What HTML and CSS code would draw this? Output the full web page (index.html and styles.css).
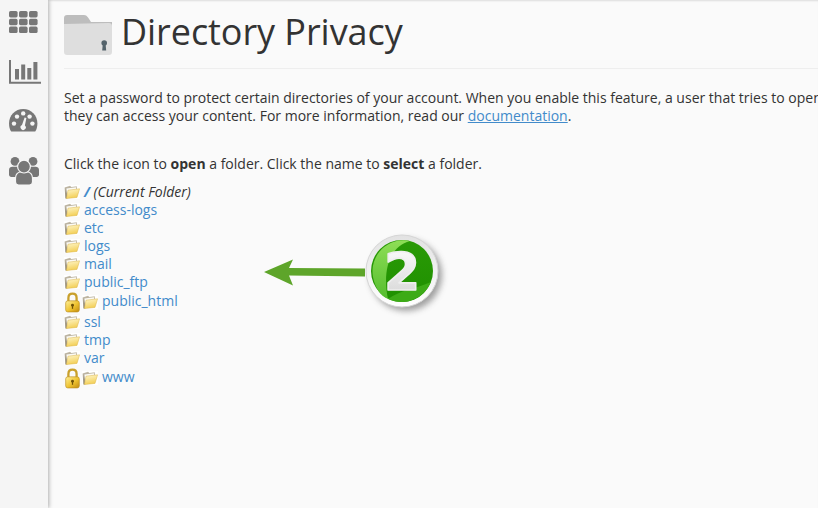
FILE: index.html
```html
<!DOCTYPE html>
<html lang="en">
<head>
    <meta charset="UTF-8">
    <meta name="viewport" content="width=device-width, initial-scale=1.0">
    <title>Directory Privacy</title>
    <link rel="stylesheet" href="styles.css">
</head>
<body>
    <!-- shared icons -->
    <svg class="defs" width="0" height="0" aria-hidden="true">
        <defs>
            <linearGradient id="folderFront" x1="0" y1="0" x2="0.3" y2="1">
                <stop offset="0" stop-color="#fff8cf"/>
                <stop offset="1" stop-color="#f3cf56"/>
            </linearGradient>
            <linearGradient id="folderBack" x1="0" y1="0" x2="0" y2="1">
                <stop offset="0" stop-color="#c4bcaa"/>
                <stop offset="1" stop-color="#8a826f"/>
            </linearGradient>
            <linearGradient id="lockBody" x1="0" y1="0" x2="1" y2="1">
                <stop offset="0" stop-color="#fff09a"/>
                <stop offset="0.55" stop-color="#eec22f"/>
                <stop offset="1" stop-color="#c08a10"/>
            </linearGradient>
            <linearGradient id="badgeGreen" x1="0" y1="0" x2="0" y2="1">
                <stop offset="0" stop-color="#2a9a06"/>
                <stop offset="1" stop-color="#1f9000"/>
            </linearGradient>
            <linearGradient id="badgeGlow" x1="0" y1="0" x2="0" y2="1">
                <stop offset="0" stop-color="#8ede56"/>
                <stop offset="1" stop-color="#55bd2e"/>
            </linearGradient>
            <linearGradient id="badgeRing" x1="0" y1="0" x2="0" y2="1">
                <stop offset="0" stop-color="#e2e2e2"/>
                <stop offset="1" stop-color="#ffffff"/>
            </linearGradient>
            <linearGradient id="digitFill" x1="0" y1="0" x2="0" y2="1">
                <stop offset="0" stop-color="#ffffff"/>
                <stop offset="1" stop-color="#d4d4d4"/>
            </linearGradient>
            <filter id="badgeShadow" x="-30%" y="-30%" width="170%" height="170%">
                <feGaussianBlur stdDeviation="3"/>
            </filter>
            <symbol id="folder" viewBox="0 0 16 14">
                <path d="M0.6 2.6 L6 0.8 L7.4 2 L12.8 1.2 L12.8 4 L3 13.6 L1.4 13.6 Z" fill="url(#folderBack)"/>
                <path d="M2.4 3.4 L12 2.2 L12 5 L3.4 12 Z" fill="#fbfaf5"/>
                <path d="M4 5.2 L15.6 3.8 L13 12.4 L2.4 13.6 Z" fill="url(#folderFront)" stroke="#dcb64c" stroke-width="0.5"/>
            </symbol>
            <symbol id="lock" viewBox="0 0 15 20">
                <path d="M3.6 9 L3.6 5.6 C3.6 3 5.2 1.6 7.5 1.6 C9.8 1.6 11.4 3 11.4 5.6 L11.4 9" fill="none" stroke="#c9a02c" stroke-width="2.2"/>
                <rect x="1" y="8.4" width="13" height="10.6" rx="2" fill="url(#lockBody)" stroke="#b98a1a" stroke-width="0.6"/>
                <circle cx="7.5" cy="12.6" r="1.4" fill="#6e5208"/>
                <rect x="6.9" y="13" width="1.2" height="3" fill="#6e5208"/>
            </symbol>
        </defs>
    </svg>

    <div class="layout">
        <nav class="sidebar">
            <svg class="nav-icon" width="30" height="24" viewBox="0 0 30 24">
                <g fill="#777">
                    <rect x="0" y="0" width="8.6" height="6.4" rx="1.6"/>
                    <rect x="10" y="0" width="8.6" height="6.4" rx="1.6"/>
                    <rect x="20" y="0" width="8.6" height="6.4" rx="1.6"/>
                    <rect x="0" y="7.8" width="8.6" height="6.4" rx="1.6"/>
                    <rect x="10" y="7.8" width="8.6" height="6.4" rx="1.6"/>
                    <rect x="20" y="7.8" width="8.6" height="6.4" rx="1.6"/>
                    <rect x="0" y="15.6" width="8.6" height="6.4" rx="1.6"/>
                    <rect x="10" y="15.6" width="8.6" height="6.4" rx="1.6"/>
                    <rect x="20" y="15.6" width="8.6" height="6.4" rx="1.6"/>
                </g>
            </svg>
            <svg class="nav-icon" width="32" height="24" viewBox="0 0 32 24">
                <path d="M1 0 V22.8 H32" fill="none" stroke="#777" stroke-width="2"/>
                <g fill="#777">
                    <rect x="6" y="9" width="4" height="10.5"/>
                    <rect x="12.2" y="4.5" width="4" height="15"/>
                    <rect x="18.3" y="8" width="4" height="11.5"/>
                    <rect x="24.4" y="2" width="4" height="17.5"/>
                </g>
            </svg>
            <svg class="nav-icon" width="29" height="23" viewBox="0 0 29 23">
                <path d="M14.2 0 C6.2 0 0 6.4 0 14.4 C0 17.6 0.8 20.4 2.2 22.6 L26.2 22.6 C27.6 20.4 28.4 17.6 28.4 14.4 C28.4 6.4 22.2 0 14.2 0 Z" fill="#777"/>
                <g fill="#f5f5f5">
                    <circle cx="5" cy="14.6" r="2.2"/>
                    <circle cx="8" cy="7.6" r="2.2"/>
                    <circle cx="14.2" cy="4.4" r="2.2"/>
                    <circle cx="23.4" cy="14.6" r="2.2"/>
                    <circle cx="20.6" cy="7.6" r="2.2"/>
                    <path d="M15.6 8.5 L17.4 9 L15.9 16.4 A2.6 2.6 0 1 1 13 16 Z"/>
                </g>
            </svg>
            <svg class="nav-icon" width="30" height="28" viewBox="0 0 30 28">
                <g fill="#777">
                    <circle cx="6" cy="4.4" r="4.4"/>
                    <circle cx="24" cy="4.4" r="4.4"/>
                    <path d="M0 13 C0 10.6 1.6 9.8 3.4 9.8 L26.6 9.8 C28.4 9.8 30 10.6 30 13 L30 17.6 C30 19 29 20 27.6 20 L2.4 20 C1 20 0 19 0 17.6 Z"/>
                    <path d="M6.5 21 C6.5 17.4 9 15 11.6 15 L18.4 15 C21 15 23.5 17.4 23.5 21 L23.5 25 C23.5 26.8 22.2 28 20.4 28 L9.6 28 C7.8 28 6.5 26.8 6.5 25 Z" stroke="#f5f5f5" stroke-width="1.2"/>
                    <circle cx="15" cy="9.6" r="6.4" stroke="#f5f5f5" stroke-width="1.2"/>
                </g>
            </svg>
        </nav>

        <main class="content">
            <header class="page-header">
                <svg class="page-icon" width="48" height="40" viewBox="0 0 48 40">
                    <path d="M0 3 C0 1.2 1.2 0 3 0 L20 0 C22 0 23 1 24.4 3 L27 7 L48 7 L48 14 L0 14 Z" fill="#bdbdbd"/>
                    <path d="M0 9 L45 8 C46.8 8 48 9.2 48 11 L48 37 C48 38.8 46.8 40 45 40 L3 40 C1.2 40 0 38.8 0 37 Z" fill="#dedede"/>
                    <circle cx="40.2" cy="28" r="2.8" fill="#54636b"/>
                    <path d="M38.8 29 L41.6 29 L42.2 35.5 L38.2 35.5 Z" fill="#54636b"/>
                </svg>
                <h1>Directory Privacy</h1>
            </header>

            <p class="intro">
                Set a password to protect certain directories of your account. When you enable this feature, a user that tries to open<br>
                they can access your content. For more information, read our <a href="#">documentation</a>.
            </p>

            <p class="hint">Click the icon to <b>open</b> a folder. Click the name to <b>select</b> a folder.</p>

            <ul class="tree">
                <li class="tree-row current">
                    <svg class="folder"><use href="#folder"/></svg>
                    <span class="current-name"><a href="#">/</a> (Current Folder)</span>
                </li>
                <li class="tree-row"><svg class="folder"><use href="#folder"/></svg><a href="#">access-logs</a></li>
                <li class="tree-row"><svg class="folder"><use href="#folder"/></svg><a href="#">etc</a></li>
                <li class="tree-row"><svg class="folder"><use href="#folder"/></svg><a href="#">logs</a></li>
                <li class="tree-row"><svg class="folder"><use href="#folder"/></svg><a href="#">mail</a></li>
                <li class="tree-row"><svg class="folder"><use href="#folder"/></svg><a href="#">public_ftp</a></li>
                <li class="tree-row locked"><svg class="lock"><use href="#lock"/></svg><svg class="folder"><use href="#folder"/></svg><a href="#">public_html</a></li>
                <li class="tree-row"><svg class="folder"><use href="#folder"/></svg><a href="#">ssl</a></li>
                <li class="tree-row"><svg class="folder"><use href="#folder"/></svg><a href="#">tmp</a></li>
                <li class="tree-row"><svg class="folder"><use href="#folder"/></svg><a href="#">var</a></li>
                <li class="tree-row locked"><svg class="lock"><use href="#lock"/></svg><svg class="folder"><use href="#folder"/></svg><a href="#">www</a></li>
            </ul>
        </main>
    </div>

    <!-- step marker drawn over the page -->
    <svg class="step-marker" width="190" height="90" viewBox="0 0 190 90">
        <path d="M4 42 L33 29.5 L29 38 L105 38.6 L105 46.6 L29 45.6 L33 55.5 Z" fill="#5ea52a"/>
        <circle cx="146" cy="45" r="36" fill="#555" opacity="0.55" filter="url(#badgeShadow)"/>
        <circle cx="142" cy="41" r="36" fill="url(#badgeRing)" stroke="#d6d6d6" stroke-width="1"/>
        <circle cx="142" cy="41" r="31" fill="url(#badgeGreen)"/>
        <path d="M113 47 A31 31 0 0 1 150 11 C130 16 122 40 128 69 C120 66 115 57 113 47 Z" fill="url(#badgeGlow)"/>
        <path d="M128 69 C140 60 158 58 171 52 C166 64 154 72 142 72 C137 72 132 71 128 69 Z" fill="#3dab17"/>
        <text class="step-digit" x="142" y="59.5" text-anchor="middle">2</text>
    </svg>
</body>
</html>
```

FILE: styles.css
```css
html, body {
    margin: 0;
    padding: 0;
    height: 100%;
    overflow: hidden;
}
body {
    position: relative;
    font-family: 'Open Sans', sans-serif;
    font-size: 14px;
    color: #333;
    background-color: #fafafa;
}
a {
    color: #428bca;
    text-decoration: none;
}
.defs {
    position: absolute;
}
.layout {
    display: flex;
    height: 100%;
}
.sidebar {
    flex: 0 0 48px;
    display: flex;
    flex-direction: column;
    align-items: flex-start;
    gap: 25px;
    box-sizing: border-box;
    padding: 11px 0 0 9px;
    background-color: #f5f5f5;
    box-shadow: 1px 0 4px rgba(0, 0, 0, 0.3);
}
.nav-icon {
    display: block;
}
.content {
    flex: 1;
    min-width: 0;
    padding: 15px 0 0 16px;
    overflow: hidden;
    box-shadow: inset 0 2px 2px -1px rgba(0, 0, 0, 0.12);
}
.page-header {
    display: flex;
    align-items: flex-start;
    gap: 9px;
    height: 53px;
    border-bottom: 1px solid #eee;
}
.page-icon {
    flex: none;
}
.page-header h1 {
    margin: -5px 0 0;
    font-size: 36px;
    font-weight: 400;
    line-height: 44px;
    letter-spacing: -0.06px;
    color: #333;
}
.intro {
    margin: 20px 0 0;
    line-height: 18px;
    white-space: nowrap;
}
.intro a {
    text-decoration: underline;
}
.hint {
    margin: 30px 0 0;
    line-height: 18px;
}
.tree {
    list-style: none;
    margin: 10px 0 0;
    padding: 0;
}
.tree-row {
    display: flex;
    align-items: center;
    height: 18px;
    line-height: 18px;
}
.tree-row.locked {
    height: 22px;
}
.tree-row.locked a {
    margin-bottom: 2px;
}
.folder {
    flex: none;
    width: 16px;
    height: 14px;
    margin-right: 4px;
    background-color: #fff;
}
.lock {
    flex: none;
    width: 17px;
    height: 21px;
    margin-right: 1px;
}
.current-name {
    font-style: italic;
}
.current-name a {
    font-weight: 700;
}
.step-marker {
    position: absolute;
    left: 260px;
    top: 230px;
}
.step-digit {
    font-family: 'DejaVu Sans', sans-serif;
    font-size: 52px;
    font-weight: 700;
    fill: url(#digitFill);
    stroke: #eeeeee;
    stroke-width: 1.6px;
    stroke-linejoin: round;
}
```
